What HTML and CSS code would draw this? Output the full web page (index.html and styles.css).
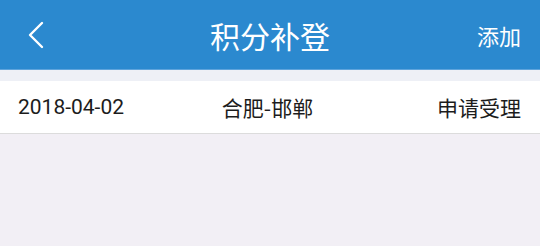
FILE: index.html
```html
<!DOCTYPE html>
<html lang="zh-CN">
<head>
<meta charset="utf-8">
<title>积分补登</title>
<link rel="stylesheet" href="styles.css">
</head>
<body>
<header class="bar">
  <span class="back">
    <svg width="18" height="28" viewBox="0 0 18 28"><path d="M15 2 L3 14 L15 26" fill="none" stroke="#fff" stroke-width="2.4" stroke-linecap="round" stroke-linejoin="round"/></svg>
  </span>
  <h1 class="title">积分补登</h1>
  <span class="action">添加</span>
</header>
<div class="gap"></div>
<div class="row">
  <span class="date">2018-04-02</span>
  <span class="route">合肥-邯郸</span>
  <span class="status">申请受理</span>
</div>
</body>
</html>
```
FILE: styles.css
```css
html, body {
  margin: 0;
  padding: 0;
}
body {
  width: 540px;
  height: 246px;
  background: #f2eff5;
  font-family: Roboto, "Noto Sans CJK SC", sans-serif;
  overflow: hidden;
}
.bar {
  height: 69px;
  background: #2b89cf;
  display: grid;
  grid-template-columns: 1fr auto 1fr;
  align-items: center;
  padding: 0 19px;
  color: #fff;
  border-bottom: 1px solid #5fa4dc;
}
.back {
  display: flex;
  align-items: center;
  padding-left: 8px;
}
.back svg {
  display: block;
  margin-top: 1px;
}
.title {
  margin: 0;
  font-family: "Noto Sans CJK SC", sans-serif;
  font-weight: 400;
  font-size: 30px;
  line-height: 1;
  margin-top: 1px;
}
.action {
  justify-self: end;
  font-family: "Noto Sans CJK SC", sans-serif;
  font-size: 22px;
  margin-top: 1px;
}
.gap {
  height: 11px;
  background: #eef0f6;
}
.row {
  height: 52px;
  background: #fff;
  border-bottom: 1px solid #dcdcdc;
  display: grid;
  grid-template-columns: 1fr auto 1fr;
  align-items: center;
  padding: 0 19px 0 18px;
  color: #1c1c1c;
  font-size: 21px;
}
.route {
  font-family: "Noto Sans CJK SC", sans-serif;
  margin-right: 4px;
}
.status {
  justify-self: end;
  font-family: "Noto Sans CJK SC", sans-serif;
}
```
